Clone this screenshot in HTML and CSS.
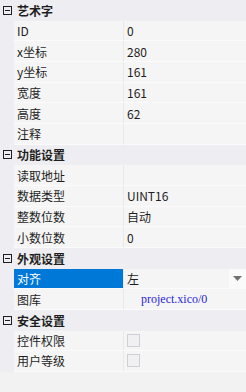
FILE: index.html
```html
<!DOCTYPE html>
<html lang="zh-CN">
<head>
<meta name="viewport" content="width=device-width, initial-scale=1">
<title>属性</title>
<link rel="stylesheet" href="styles.css">
</head>
<body>

<div class="props">

  <div class="cat"><span class="toggle"></span><span class="cat-name">艺术字</span></div>
  <div class="row"><span class="gut"></span><span class="name">ID</span><span class="val">0</span></div>
  <div class="row"><span class="gut"></span><span class="name">x坐标</span><span class="val">280</span></div>
  <div class="row"><span class="gut"></span><span class="name">y坐标</span><span class="val">161</span></div>
  <div class="row"><span class="gut"></span><span class="name">宽度</span><span class="val">161</span></div>
  <div class="row"><span class="gut"></span><span class="name">高度</span><span class="val">62</span></div>
  <div class="row"><span class="gut"></span><span class="name">注释</span><span class="val"></span></div>

  <div class="cat"><span class="toggle"></span><span class="cat-name">功能设置</span></div>
  <div class="row"><span class="gut"></span><span class="name">读取地址</span><span class="val"></span></div>
  <div class="row"><span class="gut"></span><span class="name">数据类型</span><span class="val">UINT16</span></div>
  <div class="row"><span class="gut"></span><span class="name">整数位数</span><span class="val">自动</span></div>
  <div class="row"><span class="gut"></span><span class="name">小数位数</span><span class="val">0</span></div>

  <div class="cat"><span class="toggle"></span><span class="cat-name">外观设置</span></div>
  <div class="row selected"><span class="gut"></span><span class="name">对齐</span><span class="val">左<span class="drop"><svg width="9" height="5" viewBox="0 0 9 5"><path d="M0 0h9L4.5 5z" fill="#717171"/></svg></span></span></div>
  <div class="row"><span class="gut"></span><span class="name">图库</span><span class="val"><span class="link">project.xico/0</span></span></div>

  <div class="cat"><span class="toggle"></span><span class="cat-name">安全设置</span></div>
  <div class="row"><span class="gut"></span><span class="name">控件权限</span><span class="val"><span class="check"></span></span></div>
  <div class="row"><span class="gut"></span><span class="name">用户等级</span><span class="val"><span class="check"></span></span></div>

</div>

</body>
</html>
```

FILE: styles.css
```css
body {
  margin: 0;
  background-color: #f2f2f2;
  font-family: "Noto Sans CJK SC", "Noto Sans", sans-serif;
  font-size: 12px;
  color: #1e1e1e;
}

.props {
  width: 246px;
}

.cat, .row {
  display: flex;
  height: 20.6667px;
  box-sizing: border-box;
}

.cat {
  align-items: center;
  background-color: #eeeef2;
}

.toggle {
  width: 7px;
  height: 7px;
  margin: 0 5px 0 3px;
  border: 1px solid #1e1e1e;
  position: relative;
}

.toggle::after {
  content: "";
  position: absolute;
  left: 1px;
  right: 1px;
  top: 3px;
  height: 1px;
  background-color: #1e1e1e;
}

.cat-name {
  font-weight: bold;
}

.gut {
  width: 14px;
  flex: none;
  background-color: #eeeef2;
}

.name, .val {
  display: flex;
  align-items: center;
  border-bottom: 1px solid #fbfbfb;
  background-color: #f5f5f5;
}

.name {
  width: 106px;
  flex: none;
  padding-left: 3px;
  border-right: 1px solid #e9e9e9;
}

.val {
  flex: 1;
  padding-left: 3px;
  position: relative;
}

.selected .name {
  background-color: #0078d7;
  color: #fff;
}

.drop {
  position: absolute;
  right: 0;
  top: 0;
  bottom: 0;
  width: 17px;
  background-color: #fafafa;
  display: flex;
  align-items: center;
  justify-content: center;
}

.link {
  font-family: "Liberation Serif", serif;
  font-size: 12px;
  color: #2a1ee0;
  margin-left: 14px;
}

.check {
  width: 11px;
  height: 11px;
  border: 1px solid #cfcfd6;
  background-color: #f0f0f2;
}
```
